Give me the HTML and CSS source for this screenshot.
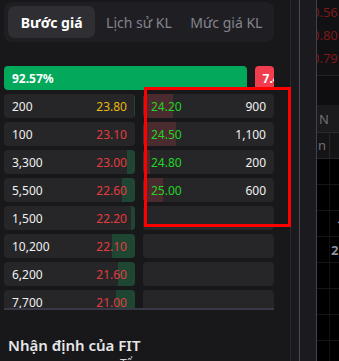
FILE: index.html
```html
<!DOCTYPE html>
<html lang="vi">
<head>
<meta charset="utf-8">
<title>Bước giá</title>
<link rel="stylesheet" href="styles.css">
</head>
<body>
<div class="main">
  <div class="panel">
    <div class="tabs">
      <div class="tab active">Bước giá</div>
      <div class="tab">Lịch sử KL</div>
      <div class="tab">Mức giá KL</div>
    </div>
    <div class="ratio">
      <div class="ratio-buy"><span class="ratio-label">92.57%</span></div>
      <div class="ratio-sell"><span class="ratio-label">7.43%</span></div>
    </div>
    <div class="book">
      <div class="col">
        <div class="row bid"><span class="bar" style="width:1px"></span><span class="qty">200</span><span class="price ref">23.80</span></div>
        <div class="row bid"><span class="bar" style="width:0px"></span><span class="qty">100</span><span class="price down">23.10</span></div>
        <div class="row bid"><span class="bar" style="width:8px"></span><span class="qty">3,300</span><span class="price down">23.00</span></div>
        <div class="row bid"><span class="bar" style="width:13px"></span><span class="qty">5,500</span><span class="price down">22.60</span></div>
        <div class="row bid"><span class="bar" style="width:4px"></span><span class="qty">1,500</span><span class="price down">22.20</span></div>
        <div class="row bid"><span class="bar" style="width:23px"></span><span class="qty">10,200</span><span class="price down">22.10</span></div>
        <div class="row bid"><span class="bar" style="width:17px"></span><span class="qty">6,200</span><span class="price down">21.60</span></div>
        <div class="row bid"><span class="bar" style="width:19px"></span><span class="qty">7,700</span><span class="price down">21.00</span></div>
      </div>
      <div class="col">
        <div class="row ask"><span class="bar" style="width:30px"></span><span class="price up">24.20</span><span class="qty">900</span></div>
        <div class="row ask"><span class="bar" style="width:33px"></span><span class="price up">24.50</span><span class="qty">1,100</span></div>
        <div class="row ask"><span class="bar" style="width:7px"></span><span class="price up">24.80</span><span class="qty">200</span></div>
        <div class="row ask"><span class="bar" style="width:20px"></span><span class="price up">25.00</span><span class="qty">600</span></div>
        <div class="row ask"></div>
        <div class="row ask"></div>
        <div class="row ask"></div>
        <div class="row ask"></div>
      </div>
    </div>
    <h2 class="heading">Nhận định của FIT</h2>
    <div class="sub">Tổng quan</div>
  </div>
</div>
<div class="sep">
  <div class="sep-a"></div>
  <div class="sep-b"></div>
</div>
<div class="side">
  <div class="side-top">
    <div class="side-num">0.56</div>
    <div class="side-num">0.80</div>
    <div class="side-num">0.79</div>
  </div>
  <div class="side-gap"></div>
  <div class="side-head">N</div>
  <div class="side-head2">n</div>
  <div class="side-cell"></div>
  <div class="side-cell"></div>
  <div class="side-cell"><span class="side-val v1">1</span></div>
  <div class="side-cell"><span class="side-val v2">2,</span></div>
  <div class="side-cell"></div>
  <div class="side-cell"></div>
  <div class="side-cell"></div>
  <div class="side-cell"></div>
</div>
<div class="highlight"></div>
</body>
</html>
```

FILE: styles.css
```css
* {
  box-sizing: border-box;
}

html, body {
  margin: 0;
  padding: 0;
}

body {
  width: 339px;
  height: 361px;
  overflow: hidden;
  background: #18181b;
  font-family: "Noto Sans", "Open Sans", sans-serif;
  display: flex;
  position: relative;
}

.main {
  width: 290px;
  flex: none;
  padding-left: 4px;
}

.panel {
  width: 270px;
}

.tabs {
  margin-top: 2px;
  height: 40px;
  padding: 4px;
  display: flex;
  background: #1f1f23;
  border-radius: 8px;
}

.tab {
  flex: 1 1 0;
  display: flex;
  align-items: center;
  justify-content: center;
  font-size: 14px;
  color: #84848e;
  border-radius: 7px;
  white-space: nowrap;
}

.tab.active {
  background: #2e2e33;
  color: #ffffff;
  font-weight: 700;
}

.ratio {
  margin-top: 24px;
  height: 24px;
  display: flex;
  gap: 8px;
}

.ratio-buy,
.ratio-sell {
  display: flex;
  align-items: center;
  padding: 0;
  border-radius: 4px;
  color: #ffffff;
  font-size: 12px;
  font-weight: 700;
  white-space: nowrap;
  overflow: hidden;
  min-width: 0;
}

.ratio-label {
  margin-left: 8px;
}

.ratio-buy {
  flex: 92.57 1 0;
  background: #02a95b;
}

.ratio-sell {
  flex: 7.43 1 0;
  background: #f03e4e;
}

.book {
  margin-top: 4px;
  height: 216px;
  overflow: hidden;
  display: grid;
  grid-template-columns: 1fr 1fr;
  column-gap: 8px;
  border-bottom: 2px solid #383846;
}

.col {
  display: flex;
  flex-direction: column;
  gap: 4px;
}

.row {
  height: 24px;
  flex: none;
  background: #262629;
  border-radius: 4px;
  position: relative;
  overflow: hidden;
  display: flex;
  justify-content: space-between;
  align-items: center;
  padding: 0 8px;
  font-size: 12px;
  color: #f0f0f0;
}

.row span {
  position: relative;
}

.row .bar {
  position: absolute;
  top: 0;
  bottom: 0;
}

.bid .bar {
  right: 0;
  background: #1f4533;
}

.ask .bar {
  left: 0;
  background: #4a2b2f;
}

.price.ref {
  color: #e6b70e;
}

.price.down {
  color: #e23c3f;
}

.price.up {
  color: #24d324;
}

.heading {
  margin: 25px 0 0;
  padding-left: 4px;
  font-size: 15px;
  line-height: 20px;
  font-weight: 600;
  color: #e6e6e8;
}

.sub {
  margin-top: 2px;
  padding-left: 116px;
  font-size: 12px;
  line-height: 14px;
  color: #d8d8dc;
}

.sep {
  width: 27px;
  flex: none;
  display: flex;
}

.sep-a {
  width: 9px;
  border-left: 1px solid #29292e;
  background: #1a1a1d;
}

.sep-b {
  width: 18px;
  border-left: 1px solid #4a4a57;
  border-right: 1px solid #42424b;
  background: #1b1b1f;
}

.side {
  flex: 1;
  min-width: 0;
  overflow: hidden;
  background: #000000;
  display: flex;
  flex-direction: column;
  font-size: 12px;
  white-space: nowrap;
}

.side-top {
  height: 76px;
  flex: none;
  background: #111113;
  border-bottom: 1px solid #232327;
  padding-top: 3px;
}

.side-num {
  height: 23px;
  line-height: 18px;
  margin-left: -5px;
  font-size: 13px;
  color: #7e1818;
}

.side-gap {
  height: 29px;
  flex: none;
  background: #0e0e10;
}

.side-head {
  height: 28px;
  flex: none;
  background: #1b1b1e;
  border-bottom: 1px solid #2a2a2e;
  padding-left: 2px;
  line-height: 28px;
  font-size: 13px;
  color: #6e6e78;
}

.side-head2 {
  height: 26px;
  flex: none;
  background: #141416;
  border-bottom: 1px solid #26262a;
  padding-left: 1px;
  line-height: 24px;
  font-size: 13px;
  color: #6e6e78;
  background-image: linear-gradient(#26262a, #26262a);
  background-size: 1px 100%;
  background-position: 12px 0;
  background-repeat: no-repeat;
}

.side-cell {
  height: 26px;
  flex: none;
  border-bottom: 1px solid #161618;
  background-image: linear-gradient(#121214, #121214);
  background-size: 1px 100%;
  background-position: 12px 0;
  background-repeat: no-repeat;
  line-height: 26px;
  color: #8e929c;
  font-weight: 700;
  font-size: 13px;
}

.side-val.v1 {
  padding-left: 20px;
}

.side-val.v2 {
  padding-left: 14px;
}

.highlight {
  position: absolute;
  left: 144px;
  top: 87px;
  width: 147px;
  height: 140px;
  border: 3px solid #ff0000;
  pointer-events: none;
}
```
